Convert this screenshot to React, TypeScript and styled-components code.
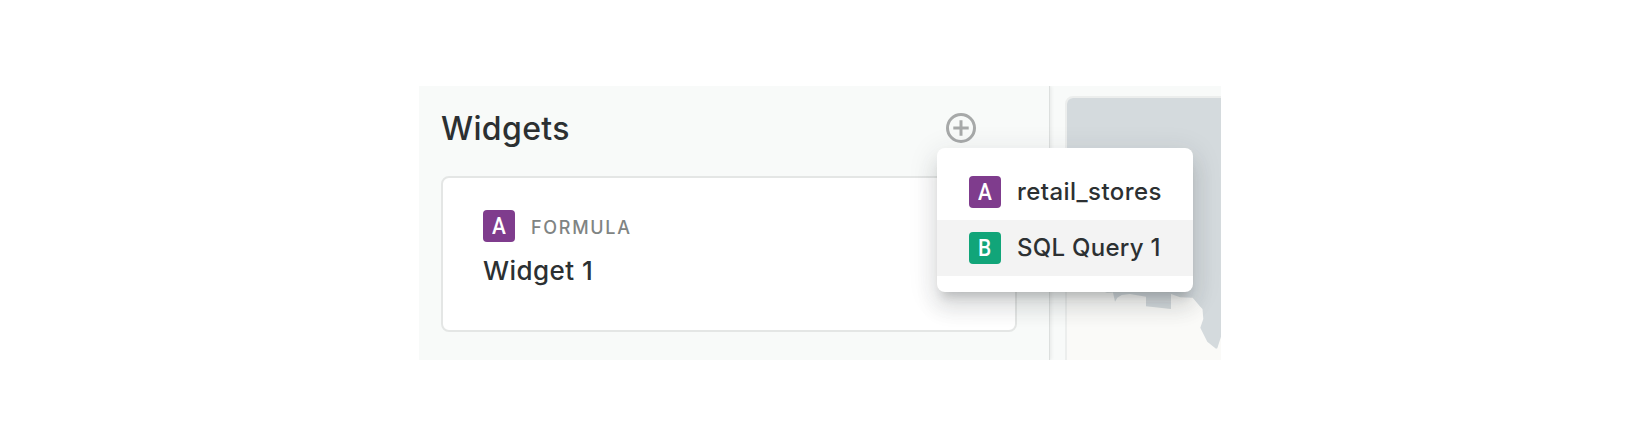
import React from "react";
import styled, { createGlobalStyle } from "styled-components";

const Global = createGlobalStyle`
  body { margin: 0; background: #ffffff; }
  * { box-sizing: border-box; }
`;

const Page = styled.main`
  display: flex;
  justify-content: center;
  align-items: flex-start;
  width: 1640px;
  height: 437px;
  padding-top: 86px;
  font-family: Inter, "Liberation Sans", sans-serif;
  color: #2c3032;
`;

const Frame = styled.div`
  display: flex;
  position: relative;
  width: 802px;
  height: 274px;
  overflow: hidden;
  background: #f8faf9;
`;

const Sidebar = styled.section`
  width: 631px;
  flex: none;
  padding: 20px 0 0 22px;
  border-right: 1px solid #dcdfde;
  box-shadow: 1px 0 4px rgba(0, 0, 0, 0.08);
`;

const Header = styled.header`
  display: flex;
  justify-content: space-between;
  align-items: center;
  width: 535px;
  height: 44px;
  margin-bottom: 26px;
`;

const Title = styled.h1`
  margin: 0;
  padding-top: 2px;
  font-size: 32px;
  line-height: 44px;
  font-weight: 450;
  letter-spacing: 0.35px;
`;

const AddButton = styled.button`
  display: flex;
  width: 30px;
  height: 30px;
  padding: 0;
  border: 0;
  background: none;
`;

const Card = styled.article`
  width: 576px;
  height: 156px;
  padding: 32px 40px;
  border: 2px solid #e4e6e5;
  border-radius: 8px;
  background: #ffffff;
`;

const CardHead = styled.div`
  display: flex;
  align-items: center;
  gap: 16px;
`;

const Badge = styled.span<{ $color: string }>`
  display: flex;
  flex: none;
  align-items: center;
  justify-content: center;
  width: 32px;
  height: 32px;
  border-radius: 4px;
  background: ${(p) => p.$color};
  color: #ffffff;
`;

const BadgeLetter = styled.span`
  font: 500 24px/32px Roboto, sans-serif;
  transform: scaleX(0.87);
`;

const Kind = styled.span`
  padding-top: 3px;
  font-size: 18px;
  line-height: 29px;
  font-weight: 450;
  letter-spacing: 1.7px;
  color: #7f8483;
`;

const WidgetName = styled.h2`
  margin: 11px 0 0;
  font-size: 26px;
  line-height: 36px;
  font-weight: 450;
  letter-spacing: 0.45px;
`;

const MapArea = styled.section`
  flex: 1;
  padding: 10px 0 0 15px;
`;

const MapPanel = styled.div`
  width: 180px;
  height: 290px;
  border: 2px solid #eceeed;
  border-radius: 8px;
  overflow: hidden;
  background: #fafaf8;
`;

const Menu = styled.ul`
  position: absolute;
  left: 518px;
  top: 62px;
  width: 256px;
  margin: 0;
  padding: 16px 0;
  list-style: none;
  border-radius: 8px;
  background: #ffffff;
  box-shadow:
    0 10px 10px -6px rgba(44, 48, 50, 0.2),
    0 16px 20px 2px rgba(44, 48, 50, 0.1),
    0 6px 28px 4px rgba(44, 48, 50, 0.09);
`;

const MenuItem = styled.li<{ $active?: boolean }>`
  display: flex;
  align-items: center;
  gap: 16px;
  height: 56px;
  padding-left: 32px;
  font-size: 24px;
  line-height: 32px;
  font-weight: 450;
  white-space: nowrap;
  background: ${(p) => (p.$active ? "#f3f3f3" : "#ffffff")};
`;

const MenuLabel = styled.span<{ $spacing: number }>`
  letter-spacing: ${(p) => p.$spacing}px;
`;

const PURPLE = "#7f3c8d";
const GREEN = "#11a579";

function SourceBadge({ letter, color }: { letter: string; color: string }) {
  return (
    <Badge $color={color}>
      <BadgeLetter>{letter}</BadgeLetter>
    </Badge>
  );
}

export default function App() {
  return (
    <>
      <Global />
      <Page>
        <Frame>
          <Sidebar>
            <Header>
              <Title>Widgets</Title>
              <AddButton aria-label="Add widget">
                <svg width="30" height="30" viewBox="0 0 30 30" fill="none" stroke="#a7a9a9" strokeWidth="3">
                  <circle cx="15" cy="15" r="13.5" />
                  <path d="M15 7.3v15.4M7.3 15h15.4" />
                </svg>
              </AddButton>
            </Header>
            <Card>
              <CardHead>
                <SourceBadge letter="A" color={PURPLE} />
                <Kind>FORMULA</Kind>
              </CardHead>
              <WidgetName>Widget 1</WidgetName>
            </Card>
          </Sidebar>
          <MapArea>
            <MapPanel>
              <svg width="176" height="286" viewBox="0 0 176 286" fill="#d4dadd">
                <path d="M0 0H154V238.7L150.3 250.3L149 250.7L140.3 243.7L133.3 229.7L136.3 221L135.5 211L133.3 208.7L125.7 199.7L113 199.3L104 196V211L79 208.3V198.7L63 196L54.7 197L50.3 199.7L48 203.7L46 194.5L40 194.7L0 180Z" />
              </svg>
            </MapPanel>
          </MapArea>
          <Menu>
            <MenuItem>
              <SourceBadge letter="A" color={PURPLE} />
              <MenuLabel $spacing={0.42}>retail_stores</MenuLabel>
            </MenuItem>
            <MenuItem $active>
              <SourceBadge letter="B" color={GREEN} />
              <MenuLabel $spacing={0.27}>SQL Query 1</MenuLabel>
            </MenuItem>
          </Menu>
        </Frame>
      </Page>
    </>
  );
}
